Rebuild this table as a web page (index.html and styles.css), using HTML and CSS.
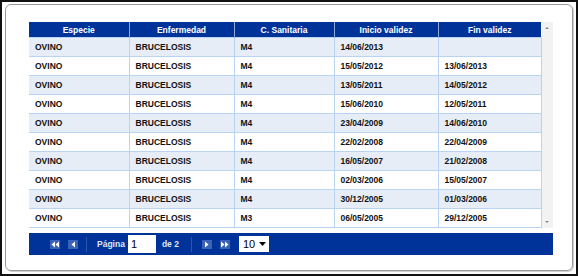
FILE: index.html
```html
<!DOCTYPE html>
<html>
<head>
<meta charset="utf-8">
<link rel="stylesheet" href="styles.css">
</head>
<body>
<div class="frame">
  <div class="panel">
    <div class="grid">
      <table class="tbl">
        <colgroup>
          <col class="c1"><col class="c2"><col class="c3"><col class="c4"><col class="c5">
        </colgroup>
        <thead>
          <tr><th>Especie</th><th>Enfermedad</th><th>C. Sanitaria</th><th>Inicio validez</th><th>Fin validez</th></tr>
        </thead>
        <tbody>
          <tr class="alt"><td>OVINO</td><td>BRUCELOSIS</td><td>M4</td><td>14/06/2013</td><td></td></tr>
          <tr><td>OVINO</td><td>BRUCELOSIS</td><td>M4</td><td>15/05/2012</td><td>13/06/2013</td></tr>
          <tr class="alt"><td>OVINO</td><td>BRUCELOSIS</td><td>M4</td><td>13/05/2011</td><td>14/05/2012</td></tr>
          <tr><td>OVINO</td><td>BRUCELOSIS</td><td>M4</td><td>15/06/2010</td><td>12/05/2011</td></tr>
          <tr class="alt"><td>OVINO</td><td>BRUCELOSIS</td><td>M4</td><td>23/04/2009</td><td>14/06/2010</td></tr>
          <tr><td>OVINO</td><td>BRUCELOSIS</td><td>M4</td><td>22/02/2008</td><td>22/04/2009</td></tr>
          <tr class="alt"><td>OVINO</td><td>BRUCELOSIS</td><td>M4</td><td>16/05/2007</td><td>21/02/2008</td></tr>
          <tr><td>OVINO</td><td>BRUCELOSIS</td><td>M4</td><td>02/03/2006</td><td>15/05/2007</td></tr>
          <tr class="alt"><td>OVINO</td><td>BRUCELOSIS</td><td>M4</td><td>30/12/2005</td><td>01/03/2006</td></tr>
          <tr><td>OVINO</td><td>BRUCELOSIS</td><td>M3</td><td>06/05/2005</td><td>29/12/2005</td></tr>
        </tbody>
      </table>
      <div class="scroll">
        <span class="arr up"></span>
        <span class="arr down"></span>
      </div>
    </div>
    <div class="pager">
      <span class="btn"><svg width="10" height="9" viewBox="0 0 10 9"><rect width="10" height="9" fill="#3a63b8"/><path d="M5 1.5 L1.5 4.5 L5 7.5Z M9 1.5 L5.5 4.5 L9 7.5Z" fill="#fff"/></svg></span>
      <span class="btn"><svg width="10" height="9" viewBox="0 0 10 9"><rect width="10" height="9" fill="#3a63b8"/><path d="M7 1.5 L3.5 4.5 L7 7.5Z" fill="#fff"/></svg></span>
      <span class="sep"></span>
      <span class="lbl">Página</span>
      <span class="inp">1</span>
      <span class="lbl de">de 2</span>
      <span class="sep"></span>
      <span class="btn"><svg width="10" height="9" viewBox="0 0 10 9"><rect width="10" height="9" fill="#3a63b8"/><path d="M3 1.5 L6.5 4.5 L3 7.5Z" fill="#fff"/></svg></span>
      <span class="btn"><svg width="10" height="9" viewBox="0 0 10 9"><rect width="10" height="9" fill="#3a63b8"/><path d="M1 1.5 L4.5 4.5 L1 7.5Z M5 1.5 L8.5 4.5 L5 7.5Z" fill="#fff"/></svg></span>
      <span class="sel">10 <svg width="7" height="4" viewBox="0 0 7 4"><path d="M0 0 L7 0 L3.5 4Z" fill="#000"/></svg></span>
    </div>
  </div>
</div>
</body>
</html>
```
FILE: styles.css
```css
html, body {
  margin: 0;
  padding: 0;
  background: #fff;
}
.frame {
  width: 578px;
  height: 276px;
  box-sizing: border-box;
  border: 2px solid #111;
  padding: 2px 3px 3px 3px;
  font-family: "Liberation Sans", Arial, sans-serif;
}
.panel {
  box-sizing: border-box;
  width: 568px;
  height: 267px;
  border: 1px solid #9a9a9a;
  border-radius: 6px;
  box-shadow: 1px 1px 1px #ccc;
  padding: 17px 18px 0 23px;
}
.grid {
  display: flex;
  width: 524px;
  height: 206px;
}
.tbl {
  width: 512px;
  border-collapse: collapse;
  table-layout: fixed;
  font-size: 8.5px;
  font-weight: bold;
}
.c1 { width: 100px; }
.c2 { width: 105px; }
.c3 { width: 100px; }
.c4 { width: 104px; }
.c5 { width: 103px; }
.tbl th {
  background: #003399;
  color: #fff;
  height: 15px;
  padding: 0;
  text-align: center;
  border-left: 1px solid #8fa8d8;
  font-weight: bold;
}
.tbl th:first-child { border-left: none; }
.tbl td {
  height: 18px;
  padding: 0 0 0 6px;
  color: #111;
  border: 1px solid #b9d3f2;
  white-space: nowrap;
}
.tbl td:first-child { border-left: none; }
.tbl tr.alt td { background: #e7edf6; }
.scroll {
  width: 12px;
  background: #f2f2f2;
  display: flex;
  flex-direction: column;
  justify-content: space-between;
  align-items: center;
  padding: 5px 0 5px 0;
  box-sizing: border-box;
}
.arr {
  width: 0;
  height: 0;
  border-left: 2px solid transparent;
  border-right: 2px solid transparent;
}
.arr.up { border-bottom: 2px solid #888; }
.arr.down { border-top: 2px solid #888; }
.pager {
  margin-top: 5px;
  width: 524px;
  height: 22px;
  background: #003399;
  display: flex;
  align-items: center;
  padding-left: 21px;
  box-sizing: border-box;
  font-size: 8.5px;
  font-weight: bold;
  color: #dfe7f7;
}
.btn {
  display: flex;
  margin-right: 8px;
}
.sep {
  width: 1px;
  height: 15px;
  background: #2d56a8;
  margin: 0 10px 0 0;
}
.lbl { margin-right: 3px; }
.de { margin-left: 6px; margin-right: 12px; }
.inp {
  width: 28px;
  height: 18px;
  background: #fff;
  color: #000;
  font-size: 11px;
  font-weight: normal;
  line-height: 18px;
  padding-left: 3px;
  box-sizing: border-box;
}
.sel {
  margin-left: 1px;
  width: 30px;
  height: 16px;
  background: #fff;
  color: #000;
  font-size: 11px;
  font-weight: normal;
  display: flex;
  align-items: center;
  gap: 4px;
  padding-left: 4px;
  box-sizing: border-box;
}
```
